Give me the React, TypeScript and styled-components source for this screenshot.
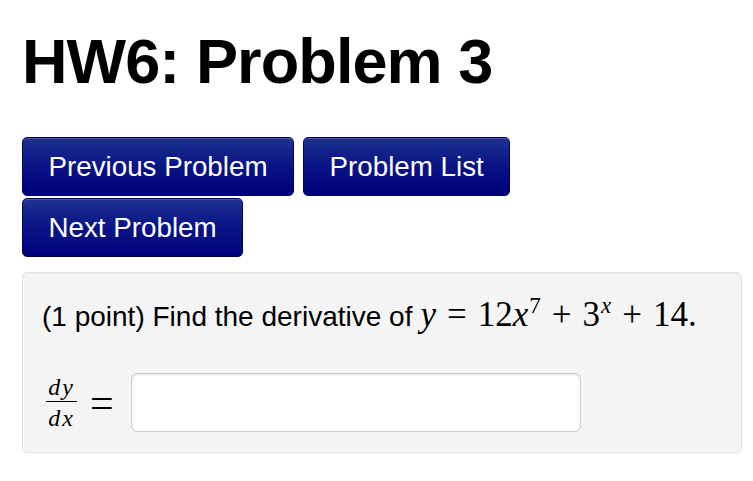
import React from "react";
import styled, { createGlobalStyle } from "styled-components";

const Global = createGlobalStyle`
  html, body { margin: 0; padding: 0; background: #ffffff; }
  body { font-family: "Liberation Sans", Arial, Helvetica, sans-serif; color: #000; }
`;

const Page = styled.div`
  padding: 30px 11px 0 22px;
`;

const Title = styled.h1`
  margin: 0;
  font-size: 63px;
  line-height: 63px;
  font-weight: bold;
  letter-spacing: -0.9px;
`;

const NavBar = styled.div`
  margin-top: 44px;
  display: flex;
  flex-wrap: wrap;
  column-gap: 9px;
  row-gap: 2px;
  max-width: 520px;
`;

const NavButton = styled.button`
  height: 59px;
  padding: 0 25.5px;
  font-family: "Liberation Sans", Arial, sans-serif;
  font-size: 27.75px;
  color: #ffffff;
  background: linear-gradient(#1f3290 0%, #0a1686 45%, #00007c 100%);
  border: 1px solid #000062;
  border-radius: 5px;
  box-shadow: inset 0 1px 0 rgba(255, 255, 255, 0.18);
  cursor: pointer;
`;

const ProblemPanel = styled.div`
  margin-top: 15px;
  width: 720px;
  box-sizing: border-box;
  padding: 22px 19px 20px 19px;
  background: #f5f5f5;
  border: 1px solid #e3e3e3;
  border-radius: 5px;
  box-shadow: inset 0 1px 1px rgba(0, 0, 0, 0.05);
`;

const Statement = styled.p`
  margin: 0;
  font-size: 28px;
  line-height: 40px;
  white-space: nowrap;
`;

const MathLine = styled.span`
  font-family: "Liberation Serif", "Times New Roman", serif;
  font-size: 35px;
  margin-left: 8px;
`;

const Var = styled.i`
  font-style: italic;
`;

const Op = styled.span<{ $gap?: number }>`
  display: inline-block;
  margin: 0 ${(p) => p.$gap ?? 10}px;
`;

const Sup = styled.sup`
  font-size: 23px;
  vertical-align: 13px;
  line-height: 0;
  margin-left: 1px;
`;

const AnswerRow = styled.div`
  margin-top: 36px;
  display: flex;
  align-items: center;
  padding-left: 4px;
`;

const Fraction = styled.span`
  display: inline-flex;
  flex-direction: column;
  align-items: center;
  font-family: "Liberation Serif", "Times New Roman", serif;
  font-style: italic;
  font-size: 24px;
  line-height: 22px;
  letter-spacing: 2px;
`;

const FracBar = styled.span`
  display: block;
  width: 31px;
  height: 1.5px;
  background: #000;
  margin: 3px 0 5px;
`;

const Equals = styled.span`
  font-family: "Liberation Serif", "Times New Roman", serif;
  font-size: 42px;
  margin: 0 17px 0 13px;
  line-height: 1;
`;

const AnswerInput = styled.input`
  width: 450px;
  height: 59px;
  box-sizing: border-box;
  border: 1px solid #cccccc;
  border-radius: 6px;
  background: #ffffff;
  box-shadow: inset 0 1px 2px rgba(0, 0, 0, 0.12);
  font-size: 24px;
  padding: 0 10px;
  outline: none;
`;

export default function App() {
  return (
    <>
      <Global />
      <Page>
        <Title>HW6: Problem 3</Title>
        <NavBar>
          <NavButton>Previous Problem</NavButton>
          <NavButton>Problem List</NavButton>
          <NavButton>Next Problem</NavButton>
        </NavBar>
        <ProblemPanel>
          <Statement>
            (1 point) Find the derivative of
            <MathLine>
              <Var>y</Var>
              <Op $gap={11}>=</Op>
              12<Var>x</Var>
              <Sup>7</Sup>
              <Op $gap={11}>+</Op>
              3<Sup><Var>x</Var></Sup>
              <Op $gap={11}>+</Op>
              14.
            </MathLine>
          </Statement>
          <AnswerRow>
            <Fraction>
              <span>dy</span>
              <FracBar />
              <span>dx</span>
            </Fraction>
            <Equals>=</Equals>
            <AnswerInput type="text" aria-label="answer" />
          </AnswerRow>
        </ProblemPanel>
      </Page>
    </>
  );
}
